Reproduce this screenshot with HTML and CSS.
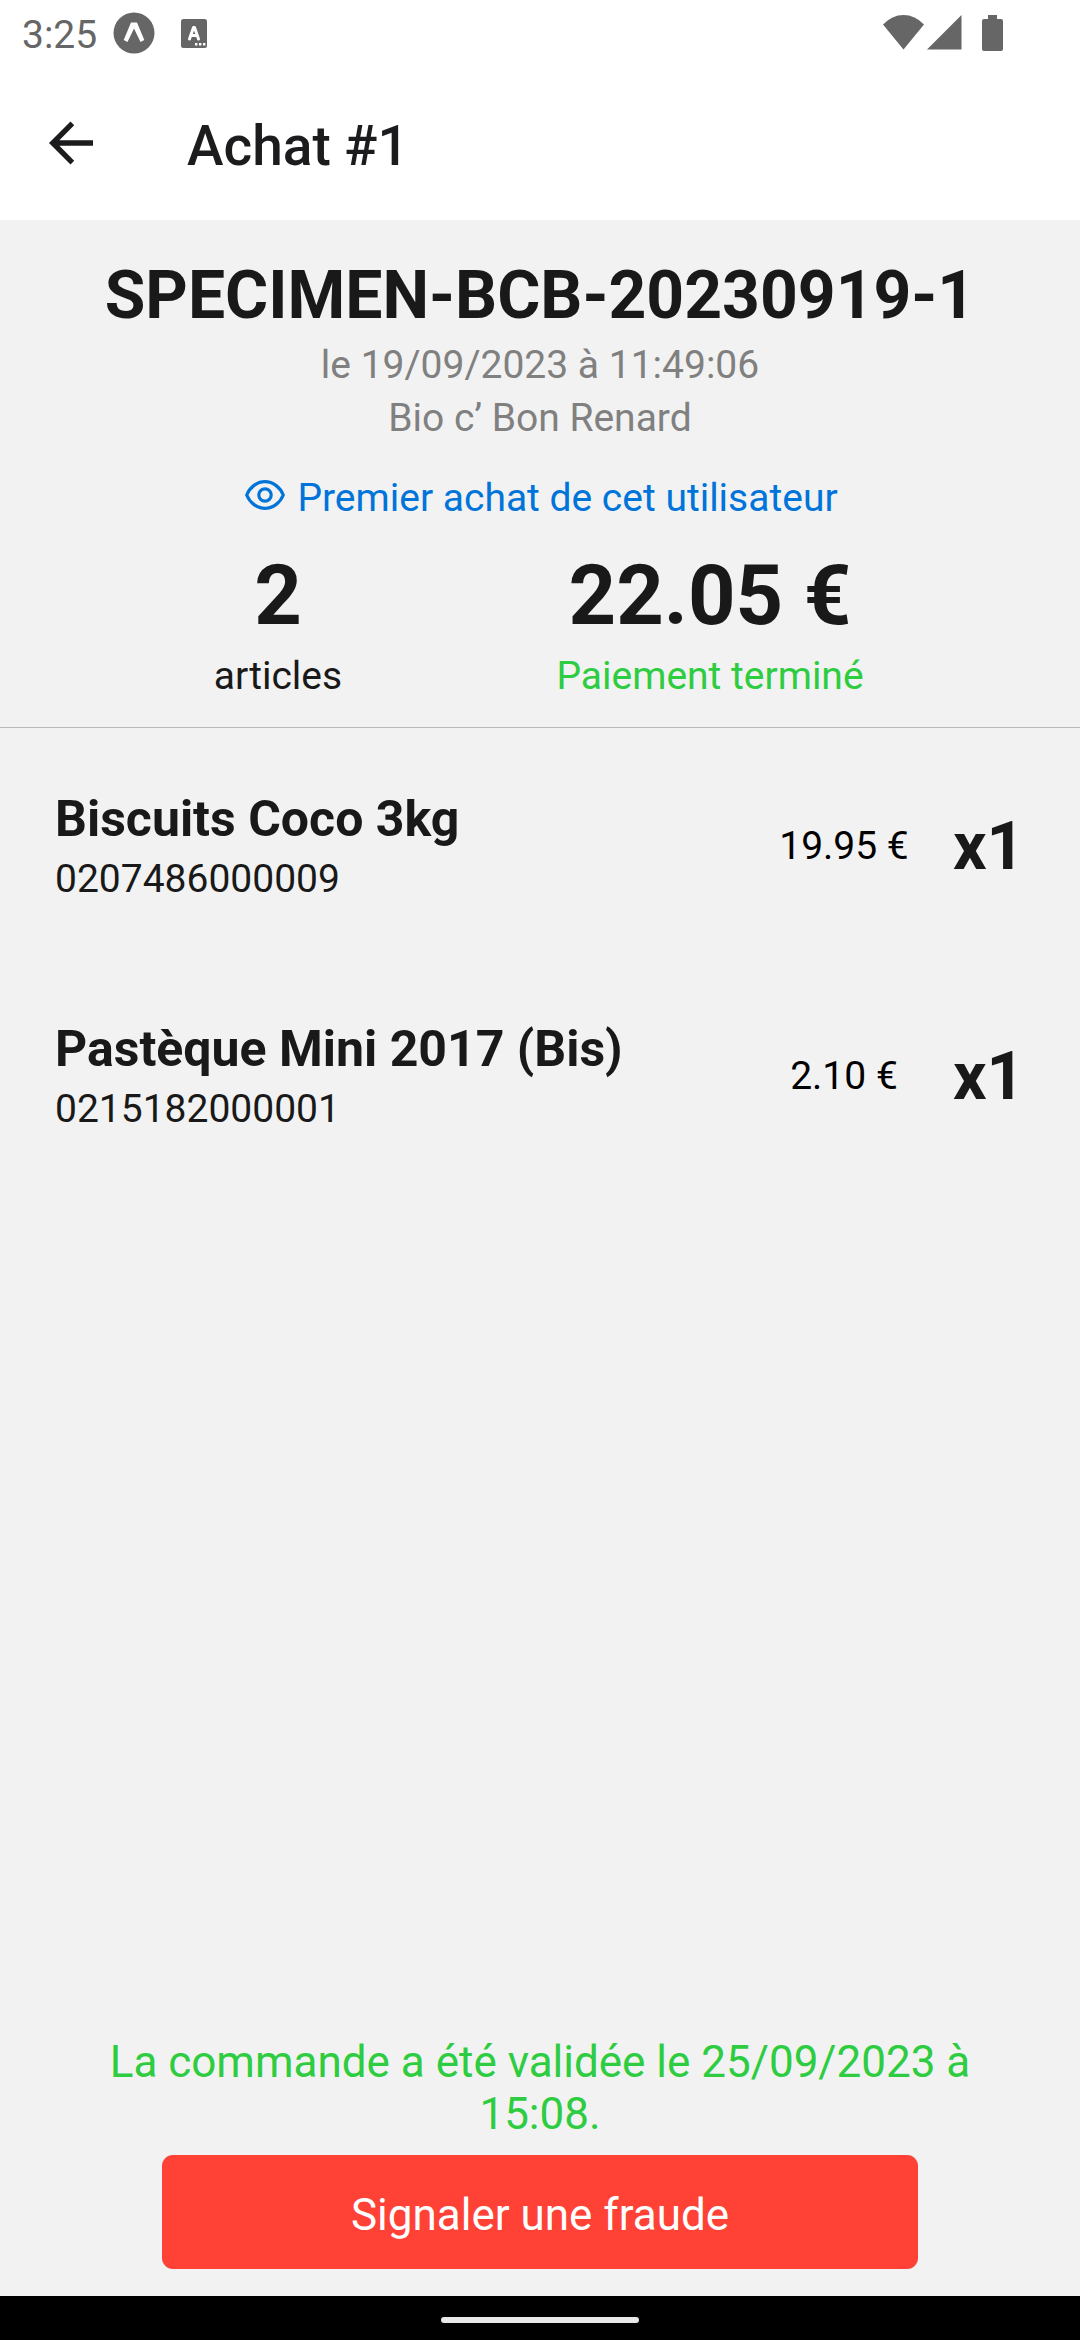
FILE: index.html
```html
<!DOCTYPE html>
<html lang="fr">
<head>
<meta charset="utf-8">
<title>Achat #1</title>
<link rel="stylesheet" href="styles.css">
</head>
<body>
<div class="screen">
  <div class="status">
    <span class="clock">3:25</span>
    <svg class="ic-expo" width="42" height="42" viewBox="0 0 42 42"><circle cx="21" cy="21" r="20.5" fill="#666"/><path d="M18 10.4h6L31.3 28l-3.8 2L21 16.600 14.500 30l-3.800-2z" fill="#fff"/></svg>
    <svg class="ic-lang" width="26" height="29" viewBox="0 0 26 29"><rect width="26" height="29" rx="2.500" fill="#666"/><path d="M8.500 20L12.500 8.500h1L17.500 20M9.800 16.500h6.500" fill="none" stroke="#fff" stroke-width="3" stroke-linecap="round" stroke-linejoin="round"/><path d="M14 24h2.400v2.400H14zM18 24h2.400v2.400H18zM22 24h2.400v2.400H22z" fill="#fff"/></svg>
    <span class="spacer"></span>
    <svg class="ic-wifi" width="41" height="35" viewBox="0 0 41 35"><path d="M0 9.500Q9 0 20.500 0T41 9.500L20.500 34.500z" fill="#666"/></svg>
    <svg class="ic-signal" width="35" height="35" viewBox="0 0 35 35"><path d="M34.500 0v34.500H0z" fill="#666"/></svg>
    <svg class="ic-battery" width="21" height="36" viewBox="0 0 21 36"><path d="M6 0h9v4h4a2 2 0 0 1 2 2v28a2 2 0 0 1-2 2H2a2 2 0 0 1-2-2V6a2 2 0 0 1 2-2h4z" fill="#666"/></svg>
  </div>
  <header class="appbar">
    <svg class="back" width="44" height="44" viewBox="0 0 44 44"><path d="M44 19.300H10.400L25.200 4.200 21.500.4 0 22l21.500 21.600 3.700-3.800L10.400 24.800H44z" fill="#1c1b1d"/></svg>
    <h1 class="title">Achat #1</h1>
  </header>
  <section class="summary">
    <h2 class="ref">SPECIMEN-BCB-20230919-1</h2>
    <p class="meta">le 19/09/2023 à 11:49:06</p>
    <p class="meta">Bio c’ Bon Renard</p>
    <p class="first"><svg class="eye" width="40" height="30" viewBox="0 0 40 30"><path d="M1.700 15C5 7 12 1.700 20 1.700S35 7 38.300 15C35 23 28 28.300 20 28.300S5 23 1.700 15z" fill="none" stroke="#0074d9" stroke-width="3.200" stroke-linejoin="round"/><circle cx="20" cy="15" r="6.200" fill="none" stroke="#0074d9" stroke-width="3.200"/></svg><span>Premier achat de cet utilisateur</span></p>
    <div class="totals">
      <div class="total"><span class="big">2</span><span class="label">articles</span></div>
      <div class="total"><span class="big">22.05 €</span><span class="label paid">Paiement terminé</span></div>
    </div>
  </section>
  <ul class="items">
    <li class="item">
      <div class="product"><span class="name">Biscuits Coco 3kg</span><span class="code">0207486000009</span></div>
      <span class="price">19.95 €</span><span class="qty">x1</span>
    </li>
    <li class="item">
      <div class="product"><span class="name">Pastèque Mini 2017 (Bis)</span><span class="code">0215182000001</span></div>
      <span class="price">2.10 €</span><span class="qty">x1</span>
    </li>
  </ul>
  <footer class="actions">
    <p class="validated">La commande a été validée le 25/09/2023 à 15:08.</p>
    <button class="fraud">Signaler une fraude</button>
  </footer>
  <div class="navbar"><span class="pill"></span></div>
</div>
</body>
</html>
```
FILE: styles.css
```css
* { box-sizing: border-box; margin: 0; padding: 0; }
body { font-family: Roboto, "Liberation Sans", sans-serif; font-size: 39px; line-height: 53px; color: #191919; background: #f2f2f2; }
svg { display: block; flex: none; }
.screen { width: 1080px; height: 2340px; display: flex; flex-direction: column; }

.status { height: 66px; flex: none; display: flex; align-items: flex-start; background: #fff; padding: 0 77px 0 22px; }
.clock { color: #666; margin-top: 9px; width: 90px; white-space: nowrap; }
.ic-expo { margin: 12px 27px 0 1px; }
.ic-lang { margin-top: 19px; margin-left: -1px; }
.spacer { flex: 1; }
.ic-wifi { margin: 15px 3px 0 0; }
.ic-signal { margin: 15px 20px 0 0; }
.ic-battery { margin-top: 15px; }

.appbar { height: 154px; flex: none; display: flex; align-items: flex-start; background: #fff; padding-left: 49px; }
.back { margin-top: 55px; }
.title { margin: 48px 0 0 94px; font-size: 55px; line-height: 64px; font-weight: 500; color: #1c1b1d; }

.summary { height: 508px; flex: none; padding-top: 37px; text-align: center; border-bottom: 1px solid #b8b8b8; }
.ref { font-size: 66px; line-height: 78px; font-weight: 700; margin-bottom: 4px; }
.meta { color: #808080; }
.first { display: flex; justify-content: center; gap: 12px; margin-top: 27px; padding-left: 3px; color: #0074d9; }
.eye { margin-top: 8px; }
.totals { display: flex; justify-content: space-between; margin-top: 22px; padding: 0 154px; }
.total { display: flex; flex-direction: column; width: 248px; gap: 5px; }
.total + .total { width: 432px; }
.big { font-size: 83px; line-height: 98px; font-weight: 700; }
.paid { color: #2ecc40; }

.items { list-style: none; padding: 0 55px; flex: 1; }
.item { height: 230px; display: flex; align-items: center; padding-top: 10px; }
.product { flex: 1; display: flex; flex-direction: column; gap: 5px; }
.name { font-size: 50px; line-height: 58px; font-weight: 700; }
.price { width: 180px; margin-bottom: 4px; text-align: center; color: #000; }
.qty { font-size: 66px; line-height: 78px; font-weight: 700; width: 91px; margin-bottom: 3px; padding-left: 19px; }

.actions { flex: none; display: flex; flex-direction: column; align-items: center; padding-bottom: 27px; }
.validated { width: 900px; font-size: 44px; line-height: 52px; text-align: center; color: #2ecc40; margin-bottom: 15px; }
.fraud { width: 756px; height: 114px; border: 0; border-radius: 11px; padding-top: 5px; background: #ff4136; color: #fff; font: 44px/52px Roboto, "Liberation Sans", sans-serif; }

.navbar { height: 44px; flex: none; background: #000; display: flex; justify-content: center; padding-top: 21px; }
.pill { width: 198px; height: 6px; border-radius: 3px; background: #e8e8e8; }
```
